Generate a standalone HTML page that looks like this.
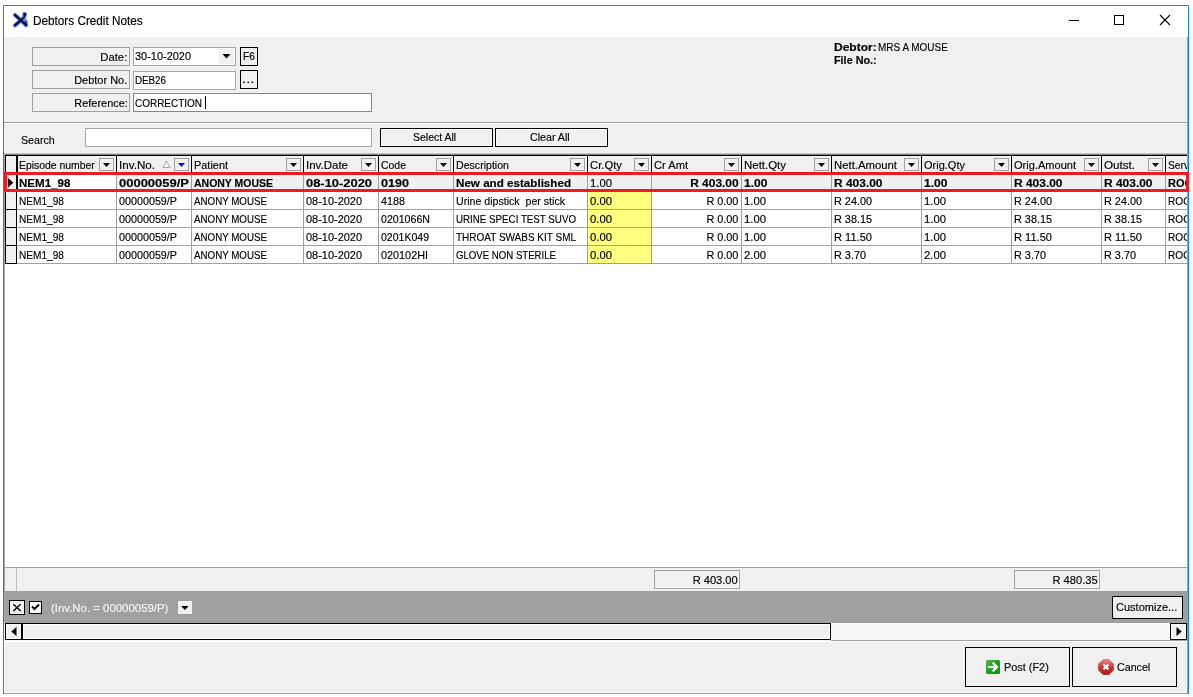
<!DOCTYPE html>
<html><head><meta charset="utf-8"><title>Debtors Credit Notes</title>
<style>
html,body{margin:0;padding:0;background:#fff;}
body{width:1193px;height:697px;position:relative;overflow:hidden;font-family:'Liberation Sans', sans-serif;}
div,span,svg{position:absolute;display:block;}
span{white-space:pre;-webkit-text-stroke:0.16px currentColor;}
</style></head><body>
<div style="left:3px;top:5px;width:1186px;height:689px;background:#f0f0f0;"></div>
<div style="left:3px;top:5px;width:1186px;height:32px;background:#fff;"></div>
<div style="left:3px;top:5px;width:1186px;height:1px;background:#1883d7;"></div>
<div style="left:3px;top:5px;width:1px;height:689px;background:#1883d7;"></div>
<div style="left:1188px;top:5px;width:1px;height:689px;background:#1883d7;"></div>
<div style="left:4px;top:693px;width:1184px;height:1px;background:#a0a0a0;"></div>
<svg style="left:8px;top:8px" width="24" height="24" viewBox="8 8 24 24">
<defs><filter id="gl" x="-30%" y="-30%" width="160%" height="160%"><feGaussianBlur stdDeviation="0.55"/></filter></defs>
<g stroke="#3a63ff" stroke-width="4.3" stroke-linecap="round" stroke-linejoin="round" fill="none" filter="url(#gl)" opacity=".85"><path d="M15 15 L26 25"/><path d="M15 25.3 L22 19.3 L24 17.5 L24.6 14"/><path d="M25.5 21.5 L26 25"/></g>
<g stroke="#0a0a0a" stroke-linecap="round" stroke-linejoin="round" fill="none"><path d="M15 15 L26 25" stroke-width="1.9"/><path d="M15 25.3 L22 19.3" stroke-width="1.9"/><path d="M22 19.3 L24.1 17.6 L24.5 14.2" stroke-width="1.3"/><path d="M24 13.8 H25.6 V15" stroke-width="1.4"/><path d="M25.6 21.8 L26 25" stroke-width="1.3"/></g>
</svg>
<div style="left:1069px;top:20px;width:10px;height:1px;background:#000;"></div>
<div style="left:1114px;top:15px;width:10px;height:10px;border:1px solid #000;box-sizing:border-box;"></div>
<svg style="left:1159px;top:14px" width="12" height="12" viewBox="0 0 12 12"><path d="M1 1 L11 11 M11 1 L1 11" stroke="#000" stroke-width="1.1" fill="none"/></svg>
<div style="left:32px;top:47px;width:98px;height:19px;background:#f0f0f0;border:1px solid #a0a0a0;box-sizing:border-box;"></div>
<div style="left:32px;top:70px;width:98px;height:19px;background:#f0f0f0;border:1px solid #a0a0a0;box-sizing:border-box;"></div>
<div style="left:32px;top:93px;width:98px;height:19px;background:#f0f0f0;border:1px solid #a0a0a0;box-sizing:border-box;"></div>
<div style="left:133px;top:47px;width:103px;height:19px;background:#fff;border:1px solid #a6a6a6;box-sizing:border-box;"></div>
<div style="left:219px;top:49px;width:15px;height:15px;background:#f0f0f0;"></div>
<svg style="left:222px;top:54px" width="9" height="5" viewBox="0 0 9 5"><path d="M0.5 0 H8.5 L4.5 4.5 Z" fill="#000"/></svg>
<div style="left:133px;top:71px;width:103px;height:19px;background:#fff;border:1px solid #a6a6a6;box-sizing:border-box;"></div>
<div style="left:133px;top:93px;width:239px;height:19px;background:#fff;border:1px solid #3399ff;box-sizing:border-box;"></div>
<div style="left:205px;top:96px;width:1px;height:13px;background:#000;"></div>
<div style="left:240px;top:47px;width:18px;height:19px;background:#f0f0f0;border:1px solid #000;box-sizing:border-box;"></div>
<div style="left:240px;top:70px;width:18px;height:19px;background:#f0f0f0;border:1px solid #000;box-sizing:border-box;"></div>
<div style="left:4px;top:122px;width:1184px;height:1px;background:#a0a0a0;"></div>
<div style="left:4px;top:123px;width:1184px;height:1px;background:#fff;"></div>
<div style="left:85px;top:128px;width:287px;height:19px;background:#fff;border:1px solid #a6a6a6;box-sizing:border-box;"></div>
<div style="left:380px;top:128px;width:113px;height:19px;background:#f0f0f0;border:1px solid #000;box-sizing:border-box;box-shadow:inset 0 0 0 1px #fafafa;"></div>
<div style="left:495px;top:128px;width:113px;height:19px;background:#f0f0f0;border:1px solid #000;box-sizing:border-box;box-shadow:inset 0 0 0 1px #fafafa;"></div>
<div style="left:4px;top:153px;width:1184px;height:1px;background:#c8c8c8;"></div>
<div style="left:4px;top:154px;width:1184px;height:1px;background:#808080;"></div>
<div style="left:5px;top:155px;width:1183px;height:1px;background:#000;"></div>
<div style="left:5px;top:156px;width:1183px;height:411px;background:#fff;"></div>
<div style="left:5px;top:156px;width:1183px;height:17px;background:#f0f0f0;"></div>
<div style="left:5px;top:173px;width:1183px;height:1px;background:#000;"></div>
<div style="left:5px;top:155px;width:1px;height:109px;background:#000;"></div>
<div style="left:16px;top:156px;width:1px;height:17px;background:#000;"></div>
<div style="left:116px;top:156px;width:1px;height:17px;background:#000;"></div>
<div style="left:191px;top:156px;width:1px;height:17px;background:#000;"></div>
<div style="left:303px;top:156px;width:1px;height:17px;background:#000;"></div>
<div style="left:378px;top:156px;width:1px;height:17px;background:#000;"></div>
<div style="left:453px;top:156px;width:1px;height:17px;background:#000;"></div>
<div style="left:587px;top:156px;width:1px;height:17px;background:#000;"></div>
<div style="left:651px;top:156px;width:1px;height:17px;background:#000;"></div>
<div style="left:741px;top:156px;width:1px;height:17px;background:#000;"></div>
<div style="left:831px;top:156px;width:1px;height:17px;background:#000;"></div>
<div style="left:921px;top:156px;width:1px;height:17px;background:#000;"></div>
<div style="left:1011px;top:156px;width:1px;height:17px;background:#000;"></div>
<div style="left:1101px;top:156px;width:1px;height:17px;background:#000;"></div>
<div style="left:1165px;top:156px;width:1px;height:17px;background:#000;"></div>
<div style="left:17px;top:156px;width:1px;height:17px;background:#000;"></div>
<div style="left:99px;top:158px;width:15px;height:13px;background:#f0f0f0;border:1px solid #a0a0a0;box-sizing:border-box;"></div>
<svg style="left:103px;top:163px" width="7" height="4" viewBox="0 0 7 4"><path d="M0 0 H7 L3.5 4 Z" fill="#000"/></svg>
<div style="left:174px;top:158px;width:15px;height:13px;background:#f0f0f0;border:1px solid #a0a0a0;box-sizing:border-box;"></div>
<svg style="left:178px;top:163px" width="7" height="4" viewBox="0 0 7 4"><path d="M0 0 H7 L3.5 4 Z" fill="#0000ff"/></svg>
<div style="left:286px;top:158px;width:15px;height:13px;background:#f0f0f0;border:1px solid #a0a0a0;box-sizing:border-box;"></div>
<svg style="left:290px;top:163px" width="7" height="4" viewBox="0 0 7 4"><path d="M0 0 H7 L3.5 4 Z" fill="#000"/></svg>
<div style="left:361px;top:158px;width:15px;height:13px;background:#f0f0f0;border:1px solid #a0a0a0;box-sizing:border-box;"></div>
<svg style="left:365px;top:163px" width="7" height="4" viewBox="0 0 7 4"><path d="M0 0 H7 L3.5 4 Z" fill="#000"/></svg>
<div style="left:436px;top:158px;width:15px;height:13px;background:#f0f0f0;border:1px solid #a0a0a0;box-sizing:border-box;"></div>
<svg style="left:440px;top:163px" width="7" height="4" viewBox="0 0 7 4"><path d="M0 0 H7 L3.5 4 Z" fill="#000"/></svg>
<div style="left:570px;top:158px;width:15px;height:13px;background:#f0f0f0;border:1px solid #a0a0a0;box-sizing:border-box;"></div>
<svg style="left:574px;top:163px" width="7" height="4" viewBox="0 0 7 4"><path d="M0 0 H7 L3.5 4 Z" fill="#000"/></svg>
<div style="left:634px;top:158px;width:15px;height:13px;background:#f0f0f0;border:1px solid #a0a0a0;box-sizing:border-box;"></div>
<svg style="left:638px;top:163px" width="7" height="4" viewBox="0 0 7 4"><path d="M0 0 H7 L3.5 4 Z" fill="#000"/></svg>
<div style="left:724px;top:158px;width:15px;height:13px;background:#f0f0f0;border:1px solid #a0a0a0;box-sizing:border-box;"></div>
<svg style="left:728px;top:163px" width="7" height="4" viewBox="0 0 7 4"><path d="M0 0 H7 L3.5 4 Z" fill="#000"/></svg>
<div style="left:814px;top:158px;width:15px;height:13px;background:#f0f0f0;border:1px solid #a0a0a0;box-sizing:border-box;"></div>
<svg style="left:818px;top:163px" width="7" height="4" viewBox="0 0 7 4"><path d="M0 0 H7 L3.5 4 Z" fill="#000"/></svg>
<div style="left:904px;top:158px;width:15px;height:13px;background:#f0f0f0;border:1px solid #a0a0a0;box-sizing:border-box;"></div>
<svg style="left:908px;top:163px" width="7" height="4" viewBox="0 0 7 4"><path d="M0 0 H7 L3.5 4 Z" fill="#000"/></svg>
<div style="left:994px;top:158px;width:15px;height:13px;background:#f0f0f0;border:1px solid #a0a0a0;box-sizing:border-box;"></div>
<svg style="left:998px;top:163px" width="7" height="4" viewBox="0 0 7 4"><path d="M0 0 H7 L3.5 4 Z" fill="#000"/></svg>
<div style="left:1084px;top:158px;width:15px;height:13px;background:#f0f0f0;border:1px solid #a0a0a0;box-sizing:border-box;"></div>
<svg style="left:1088px;top:163px" width="7" height="4" viewBox="0 0 7 4"><path d="M0 0 H7 L3.5 4 Z" fill="#000"/></svg>
<div style="left:1148px;top:158px;width:15px;height:13px;background:#f0f0f0;border:1px solid #a0a0a0;box-sizing:border-box;"></div>
<svg style="left:1152px;top:163px" width="7" height="4" viewBox="0 0 7 4"><path d="M0 0 H7 L3.5 4 Z" fill="#000"/></svg>
<svg style="left:162px;top:160px" width="9" height="8" viewBox="0 0 9 8"><path d="M4.5 1 L8 7.5 H1 Z" fill="#fff" stroke="#a0a0a0" stroke-width="1"/></svg>
<div style="left:117px;top:174px;width:1071px;height:17px;background:#f0f0f0;"></div>
<div style="left:652px;top:174px;width:89px;height:17px;background:#f0f0f0;"></div>
<div style="left:6px;top:174px;width:10px;height:17px;background:#f0f0f0;"></div>
<div style="left:5px;top:191px;width:12px;height:1px;background:#000;"></div>
<div style="left:17px;top:191px;width:1171px;height:1px;background:#a0a0a0;"></div>
<div style="left:116px;top:174px;width:1px;height:18px;background:#a0a0a0;"></div>
<div style="left:191px;top:174px;width:1px;height:18px;background:#a0a0a0;"></div>
<div style="left:303px;top:174px;width:1px;height:18px;background:#a0a0a0;"></div>
<div style="left:378px;top:174px;width:1px;height:18px;background:#a0a0a0;"></div>
<div style="left:453px;top:174px;width:1px;height:18px;background:#a0a0a0;"></div>
<div style="left:587px;top:174px;width:1px;height:18px;background:#a0a0a0;"></div>
<div style="left:651px;top:174px;width:1px;height:18px;background:#a0a0a0;"></div>
<div style="left:741px;top:174px;width:1px;height:18px;background:#a0a0a0;"></div>
<div style="left:831px;top:174px;width:1px;height:18px;background:#a0a0a0;"></div>
<div style="left:921px;top:174px;width:1px;height:18px;background:#a0a0a0;"></div>
<div style="left:1011px;top:174px;width:1px;height:18px;background:#a0a0a0;"></div>
<div style="left:1101px;top:174px;width:1px;height:18px;background:#a0a0a0;"></div>
<div style="left:1165px;top:174px;width:1px;height:18px;background:#a0a0a0;"></div>
<div style="left:16px;top:174px;width:1px;height:18px;background:#000;"></div>
<div style="left:17px;top:174px;width:1px;height:17px;background:#000;"></div>
<div style="left:588px;top:192px;width:63px;height:17px;background:#ffff80;"></div>
<div style="left:6px;top:192px;width:10px;height:17px;background:#f0f0f0;"></div>
<div style="left:5px;top:209px;width:12px;height:1px;background:#000;"></div>
<div style="left:17px;top:209px;width:1171px;height:1px;background:#a0a0a0;"></div>
<div style="left:116px;top:192px;width:1px;height:18px;background:#a0a0a0;"></div>
<div style="left:191px;top:192px;width:1px;height:18px;background:#a0a0a0;"></div>
<div style="left:303px;top:192px;width:1px;height:18px;background:#a0a0a0;"></div>
<div style="left:378px;top:192px;width:1px;height:18px;background:#a0a0a0;"></div>
<div style="left:453px;top:192px;width:1px;height:18px;background:#a0a0a0;"></div>
<div style="left:587px;top:192px;width:1px;height:18px;background:#a0a0a0;"></div>
<div style="left:651px;top:192px;width:1px;height:18px;background:#a0a0a0;"></div>
<div style="left:741px;top:192px;width:1px;height:18px;background:#a0a0a0;"></div>
<div style="left:831px;top:192px;width:1px;height:18px;background:#a0a0a0;"></div>
<div style="left:921px;top:192px;width:1px;height:18px;background:#a0a0a0;"></div>
<div style="left:1011px;top:192px;width:1px;height:18px;background:#a0a0a0;"></div>
<div style="left:1101px;top:192px;width:1px;height:18px;background:#a0a0a0;"></div>
<div style="left:1165px;top:192px;width:1px;height:18px;background:#a0a0a0;"></div>
<div style="left:16px;top:192px;width:1px;height:18px;background:#000;"></div>
<div style="left:588px;top:210px;width:63px;height:17px;background:#ffff80;"></div>
<div style="left:6px;top:210px;width:10px;height:17px;background:#f0f0f0;"></div>
<div style="left:5px;top:227px;width:12px;height:1px;background:#000;"></div>
<div style="left:17px;top:227px;width:1171px;height:1px;background:#a0a0a0;"></div>
<div style="left:116px;top:210px;width:1px;height:18px;background:#a0a0a0;"></div>
<div style="left:191px;top:210px;width:1px;height:18px;background:#a0a0a0;"></div>
<div style="left:303px;top:210px;width:1px;height:18px;background:#a0a0a0;"></div>
<div style="left:378px;top:210px;width:1px;height:18px;background:#a0a0a0;"></div>
<div style="left:453px;top:210px;width:1px;height:18px;background:#a0a0a0;"></div>
<div style="left:587px;top:210px;width:1px;height:18px;background:#a0a0a0;"></div>
<div style="left:651px;top:210px;width:1px;height:18px;background:#a0a0a0;"></div>
<div style="left:741px;top:210px;width:1px;height:18px;background:#a0a0a0;"></div>
<div style="left:831px;top:210px;width:1px;height:18px;background:#a0a0a0;"></div>
<div style="left:921px;top:210px;width:1px;height:18px;background:#a0a0a0;"></div>
<div style="left:1011px;top:210px;width:1px;height:18px;background:#a0a0a0;"></div>
<div style="left:1101px;top:210px;width:1px;height:18px;background:#a0a0a0;"></div>
<div style="left:1165px;top:210px;width:1px;height:18px;background:#a0a0a0;"></div>
<div style="left:16px;top:210px;width:1px;height:18px;background:#000;"></div>
<div style="left:588px;top:228px;width:63px;height:17px;background:#ffff80;"></div>
<div style="left:6px;top:228px;width:10px;height:17px;background:#f0f0f0;"></div>
<div style="left:5px;top:245px;width:12px;height:1px;background:#000;"></div>
<div style="left:17px;top:245px;width:1171px;height:1px;background:#a0a0a0;"></div>
<div style="left:116px;top:228px;width:1px;height:18px;background:#a0a0a0;"></div>
<div style="left:191px;top:228px;width:1px;height:18px;background:#a0a0a0;"></div>
<div style="left:303px;top:228px;width:1px;height:18px;background:#a0a0a0;"></div>
<div style="left:378px;top:228px;width:1px;height:18px;background:#a0a0a0;"></div>
<div style="left:453px;top:228px;width:1px;height:18px;background:#a0a0a0;"></div>
<div style="left:587px;top:228px;width:1px;height:18px;background:#a0a0a0;"></div>
<div style="left:651px;top:228px;width:1px;height:18px;background:#a0a0a0;"></div>
<div style="left:741px;top:228px;width:1px;height:18px;background:#a0a0a0;"></div>
<div style="left:831px;top:228px;width:1px;height:18px;background:#a0a0a0;"></div>
<div style="left:921px;top:228px;width:1px;height:18px;background:#a0a0a0;"></div>
<div style="left:1011px;top:228px;width:1px;height:18px;background:#a0a0a0;"></div>
<div style="left:1101px;top:228px;width:1px;height:18px;background:#a0a0a0;"></div>
<div style="left:1165px;top:228px;width:1px;height:18px;background:#a0a0a0;"></div>
<div style="left:16px;top:228px;width:1px;height:18px;background:#000;"></div>
<div style="left:588px;top:246px;width:63px;height:17px;background:#ffff80;"></div>
<div style="left:6px;top:246px;width:10px;height:17px;background:#f0f0f0;"></div>
<div style="left:5px;top:263px;width:12px;height:1px;background:#000;"></div>
<div style="left:17px;top:263px;width:1171px;height:1px;background:#a0a0a0;"></div>
<div style="left:116px;top:246px;width:1px;height:18px;background:#a0a0a0;"></div>
<div style="left:191px;top:246px;width:1px;height:18px;background:#a0a0a0;"></div>
<div style="left:303px;top:246px;width:1px;height:18px;background:#a0a0a0;"></div>
<div style="left:378px;top:246px;width:1px;height:18px;background:#a0a0a0;"></div>
<div style="left:453px;top:246px;width:1px;height:18px;background:#a0a0a0;"></div>
<div style="left:587px;top:246px;width:1px;height:18px;background:#a0a0a0;"></div>
<div style="left:651px;top:246px;width:1px;height:18px;background:#a0a0a0;"></div>
<div style="left:741px;top:246px;width:1px;height:18px;background:#a0a0a0;"></div>
<div style="left:831px;top:246px;width:1px;height:18px;background:#a0a0a0;"></div>
<div style="left:921px;top:246px;width:1px;height:18px;background:#a0a0a0;"></div>
<div style="left:1011px;top:246px;width:1px;height:18px;background:#a0a0a0;"></div>
<div style="left:1101px;top:246px;width:1px;height:18px;background:#a0a0a0;"></div>
<div style="left:1165px;top:246px;width:1px;height:18px;background:#a0a0a0;"></div>
<div style="left:16px;top:246px;width:1px;height:18px;background:#000;"></div>
<svg style="left:8px;top:178px" width="6" height="10" viewBox="0 0 6 10"><path d="M0 0 L5.3 4.7 L0 9.4 Z" fill="#000"/></svg>
<div style="left:4px;top:154px;width:1px;height:469px;background:#a8a8a8;"></div>
<div style="left:5px;top:567px;width:1183px;height:1px;background:#a0a0a0;"></div>
<div style="left:5px;top:568px;width:1183px;height:23px;background:#f0f0f0;"></div>
<div style="left:16px;top:568px;width:1px;height:23px;background:#c0c0c0;"></div>
<div style="left:654px;top:570px;width:86px;height:19px;background:#f0f0f0;border:1px solid #a0a0a0;box-sizing:border-box;"></div>
<div style="left:655px;top:587px;width:84px;height:1px;background:#fbfbfb;"></div>
<div style="left:738px;top:571px;width:1px;height:17px;background:#fbfbfb;"></div>
<div style="left:1014px;top:570px;width:86px;height:19px;background:#f0f0f0;border:1px solid #a0a0a0;box-sizing:border-box;"></div>
<div style="left:1015px;top:587px;width:84px;height:1px;background:#fbfbfb;"></div>
<div style="left:1098px;top:571px;width:1px;height:17px;background:#fbfbfb;"></div>
<div style="left:5px;top:591px;width:1183px;height:32px;background:#a0a0a0;"></div>
<div style="left:9px;top:600px;width:16px;height:15px;background:#f0f0f0;border:1px solid #000;box-sizing:border-box;"></div>
<svg style="left:12px;top:603px" width="10" height="9" viewBox="0 0 10 9"><path d="M1.3 1.2 L8.7 8 M8.7 1.2 L1.3 8" stroke="#000" stroke-width="1.4" fill="none"/></svg>
<div style="left:29px;top:601px;width:13px;height:13px;background:#fff;border:1px solid #000;box-sizing:border-box;"></div>
<svg style="left:31px;top:603px" width="9" height="9" viewBox="0 0 9 9"><path d="M1 3.5 L3.5 6 L8 1.5" stroke="#000" stroke-width="2" fill="none"/></svg>
<div style="left:178px;top:601px;width:14px;height:13px;background:#f0f0f0;"></div>
<svg style="left:181px;top:606px" width="8" height="4" viewBox="0 0 8 4"><path d="M0.2 0 H7.6 L3.9 4 Z" fill="#000"/></svg>
<div style="left:1112px;top:596px;width:71px;height:23px;background:#f0f0f0;border:1px solid #000;box-sizing:border-box;"></div>
<div style="left:5px;top:623px;width:1183px;height:17px;background:#f8f8f8;"></div>
<div style="left:5px;top:623px;width:17px;height:17px;background:#f0f0f0;border:1px solid #000;box-sizing:border-box;box-shadow:inset 0 0 0 1px #fff;"></div>
<div style="left:22px;top:623px;width:809px;height:17px;background:#f0f0f0;border:1px solid #000;box-sizing:border-box;box-shadow:inset 0 0 0 1px #fff;"></div>
<svg style="left:10.5px;top:627px" width="6" height="9" viewBox="0 0 6 9"><path d="M5.5 0 V9 L0.3 4.5 Z" fill="#000"/></svg>
<div style="left:1170px;top:623px;width:17px;height:17px;background:#f0f0f0;border:1px solid #000;box-sizing:border-box;box-shadow:inset 0 0 0 1px #fff;"></div>
<svg style="left:1176px;top:627px" width="6" height="9" viewBox="0 0 6 9"><path d="M0.5 0 V9 L5.7 4.5 Z" fill="#000"/></svg>
<div style="left:5px;top:640px;width:826px;height:1px;background:#f4f4f4;"></div>
<div style="left:831px;top:640px;width:357px;height:1px;background:#a0a0a0;"></div>
<div style="left:4px;top:641px;width:1184px;height:1px;background:#fff;"></div>
<div style="left:4px;top:641px;width:1px;height:52px;background:#fff;"></div>
<div style="left:5px;top:692px;width:1182px;height:1px;background:#f8f8f8;"></div>
<div style="left:965px;top:647px;width:105px;height:40px;background:#f0f0f0;border:1px solid #000;box-sizing:border-box;"></div>
<div style="left:1072px;top:647px;width:105px;height:40px;background:#f0f0f0;border:1px solid #000;box-sizing:border-box;"></div>
<svg style="left:986px;top:660px" width="14" height="14" viewBox="0 0 14 14">
<defs><linearGradient id="gg" x1="0" y1="0" x2="1" y2="1"><stop offset="0" stop-color="#4cb84c"/><stop offset=".45" stop-color="#1fa01f"/><stop offset="1" stop-color="#089408"/></linearGradient></defs>
<rect x="0" y="0" width="14" height="14" rx="1.6" fill="url(#gg)"/>
<path d="M2.2 7 H10.5" stroke="#fff" stroke-width="2.2" fill="none"/>
<path d="M6.6 2.6 L11 7 L6.6 11.4" stroke="#fff" stroke-width="2.2" fill="none" stroke-linejoin="miter"/></svg>
<svg style="left:1098px;top:659px" width="16" height="16" viewBox="0 0 16 16">
<defs><linearGradient id="rg" x1="0" y1="0" x2="0" y2="1"><stop offset="0" stop-color="#dd7f7f"/><stop offset=".5" stop-color="#c63a3a"/><stop offset="1" stop-color="#b42020"/></linearGradient></defs>
<path d="M5.6 1.6 H10.4 L14.4 5.6 V10.4 L10.4 14.4 H5.6 L1.6 10.4 V5.6 Z" fill="url(#rg)" stroke="url(#rg)" stroke-width="3" stroke-linejoin="round"/>
<path d="M5.5 5.4 L10.4 10.3 M10.4 5.4 L5.5 10.3" stroke="#fff" stroke-width="2.1" fill="none"/></svg>
<span style="top:13.84px;line-height:14px;font-size:12px;font-weight:normal;color:#000;left:33.4px;transform-origin:0 0;transform:scaleX(0.9791);">Debtors Credit Notes</span>
<span style="top:50.19px;line-height:14px;font-size:11px;font-weight:normal;color:#000;right:1065.7px;transform-origin:100% 0;transform:scaleX(1.0267);">Date:</span>
<span style="top:73.19px;line-height:14px;font-size:11px;font-weight:normal;color:#000;right:1065.7px;transform-origin:100% 0;transform:scaleX(0.9962);">Debtor No.</span>
<span style="top:96.19px;line-height:14px;font-size:11px;font-weight:normal;color:#000;right:1065.7px;transform-origin:100% 0;transform:scaleX(0.9942);">Reference:</span>
<span style="top:49.19px;line-height:14px;font-size:11px;font-weight:normal;color:#000;left:135px;transform-origin:0 0;transform:scaleX(0.9950);">30-10-2020</span>
<span style="top:73.19px;line-height:14px;font-size:11px;font-weight:normal;color:#000;left:135px;transform-origin:0 0;transform:scaleX(0.8893);">DEB26</span>
<span style="top:96.19px;line-height:14px;font-size:11px;font-weight:normal;color:#000;left:135px;transform-origin:0 0;transform:scaleX(0.9060);">CORRECTION</span>
<span style="top:49.19px;line-height:14px;font-size:11px;font-weight:normal;color:#000;left:243px;transform-origin:0 0;transform:scaleX(0.9343);">F6</span>
<span style="top:72.19px;line-height:14px;font-size:11px;font-weight:normal;color:#000;left:242.20000000000002px;transform-origin:0 0;transform:scaleX(1.3520);">...</span>
<span style="top:40.19px;line-height:14px;font-size:11px;font-weight:bold;color:#000;left:833.6999999999999px;transform-origin:0 0;transform:scaleX(1.0918);">Debtor:</span>
<span style="top:40.19px;line-height:14px;font-size:11px;font-weight:normal;color:#000;left:877.9px;transform-origin:0 0;transform:scaleX(0.9074);">MRS A MOUSE</span>
<span style="top:53.19px;line-height:14px;font-size:11px;font-weight:bold;color:#000;left:833.6999999999999px;transform-origin:0 0;transform:scaleX(0.9841);">File No.:</span>
<span style="top:133.19px;line-height:14px;font-size:11px;font-weight:normal;color:#000;left:20.9px;transform-origin:0 0;transform:scaleX(0.9667);">Search</span>
<span style="top:130.19px;line-height:14px;font-size:11px;font-weight:normal;color:#000;left:413.2px;transform-origin:0 0;transform:scaleX(0.9547);">Select All</span>
<span style="top:130.19px;line-height:14px;font-size:11px;font-weight:normal;color:#000;left:530.1px;transform-origin:0 0;transform:scaleX(0.9690);">Clear All</span>
<span style="top:158.19px;line-height:14px;font-size:11px;font-weight:normal;color:#000;left:18.8px;transform-origin:0 0;transform:scaleX(0.9462);">Episode number</span>
<span style="top:158.19px;line-height:14px;font-size:11px;font-weight:normal;color:#000;left:118.8px;transform-origin:0 0;transform:scaleX(1.0579);">Inv.No.</span>
<span style="top:158.19px;line-height:14px;font-size:11px;font-weight:normal;color:#000;left:193.8px;transform-origin:0 0;transform:scaleX(0.9927);">Patient</span>
<span style="top:158.19px;line-height:14px;font-size:11px;font-weight:normal;color:#000;left:305.8px;transform-origin:0 0;transform:scaleX(1.0459);">Inv.Date</span>
<span style="top:158.19px;line-height:14px;font-size:11px;font-weight:normal;color:#000;left:380.8px;transform-origin:0 0;transform:scaleX(0.9507);">Code</span>
<span style="top:158.19px;line-height:14px;font-size:11px;font-weight:normal;color:#000;left:455.8px;transform-origin:0 0;transform:scaleX(0.9631);">Description</span>
<span style="top:158.19px;line-height:14px;font-size:11px;font-weight:normal;color:#000;left:589.8px;transform-origin:0 0;transform:scaleX(1.0266);">Cr.Qty</span>
<span style="top:158.19px;line-height:14px;font-size:11px;font-weight:normal;color:#000;left:653.8px;transform-origin:0 0;transform:scaleX(1.0112);">Cr Amt</span>
<span style="top:158.19px;line-height:14px;font-size:11px;font-weight:normal;color:#000;left:743.8px;transform-origin:0 0;transform:scaleX(1.0411);">Nett.Qty</span>
<span style="top:158.19px;line-height:14px;font-size:11px;font-weight:normal;color:#000;left:833.8px;transform-origin:0 0;transform:scaleX(1.0304);">Nett.Amount</span>
<span style="top:158.19px;line-height:14px;font-size:11px;font-weight:normal;color:#000;left:923.8px;transform-origin:0 0;transform:scaleX(1.0011);">Orig.Qty</span>
<span style="top:158.19px;line-height:14px;font-size:11px;font-weight:normal;color:#000;left:1013.8px;transform-origin:0 0;transform:scaleX(1.0040);">Orig.Amount</span>
<span style="top:158.19px;line-height:14px;font-size:11px;font-weight:normal;color:#000;left:1103.8px;transform-origin:0 0;transform:scaleX(1.0564);">Outst.</span>
<span style="top:158.19px;line-height:14px;font-size:11px;font-weight:normal;color:#000;left:1167.8px;transform-origin:0 0;transform:scaleX(0.9282);">Serv</span>
<span style="top:176.19px;line-height:14px;font-size:11px;font-weight:bold;color:#000;left:18.7px;transform-origin:0 0;transform:scaleX(1.0507);">NEM1_98</span>
<span style="top:176.19px;line-height:14px;font-size:11px;font-weight:bold;color:#000;left:118.7px;transform-origin:0 0;transform:scaleX(1.1796);">00000059/P</span>
<span style="top:176.19px;line-height:14px;font-size:11px;font-weight:bold;color:#000;left:193.7px;transform-origin:0 0;transform:scaleX(0.9527);">ANONY MOUSE</span>
<span style="top:176.19px;line-height:14px;font-size:11px;font-weight:bold;color:#000;left:305.7px;transform-origin:0 0;transform:scaleX(1.1727);">08-10-2020</span>
<span style="top:176.19px;line-height:14px;font-size:11px;font-weight:bold;color:#000;left:380.7px;transform-origin:0 0;transform:scaleX(1.1436);">0190</span>
<span style="top:176.19px;line-height:14px;font-size:11px;font-weight:bold;color:#000;left:455.7px;transform-origin:0 0;transform:scaleX(1.0569);">New and established</span>
<span style="top:176.19px;line-height:14px;font-size:11px;font-weight:normal;color:#000;left:589.7px;transform-origin:0 0;transform:scaleX(1.0270);">1.00</span>
<span style="top:176.19px;line-height:14px;font-size:11px;font-weight:bold;color:#000;right:454.79999999999995px;transform-origin:100% 0;transform:scaleX(1.0861);">R 403.00</span>
<span style="top:176.19px;line-height:14px;font-size:11px;font-weight:bold;color:#000;left:743.7px;transform-origin:0 0;transform:scaleX(1.0970);">1.00</span>
<span style="top:176.19px;line-height:14px;font-size:11px;font-weight:bold;color:#000;left:833.7px;transform-origin:0 0;transform:scaleX(1.0861);">R 403.00</span>
<span style="top:176.19px;line-height:14px;font-size:11px;font-weight:bold;color:#000;left:923.7px;transform-origin:0 0;transform:scaleX(1.0970);">1.00</span>
<span style="top:176.19px;line-height:14px;font-size:11px;font-weight:bold;color:#000;left:1013.7px;transform-origin:0 0;transform:scaleX(1.0861);">R 403.00</span>
<span style="top:176.19px;line-height:14px;font-size:11px;font-weight:bold;color:#000;left:1103.7px;transform-origin:0 0;transform:scaleX(1.0861);">R 403.00</span>
<span style="top:176.19px;line-height:14px;font-size:11px;font-weight:bold;color:#000;left:1167.7px;transform-origin:0 0;transform:scaleX(0.9975);">ROO</span>
<span style="top:194.19px;line-height:14px;font-size:11px;font-weight:normal;color:#000;left:18.7px;transform-origin:0 0;transform:scaleX(0.9198);">NEM1_98</span>
<span style="top:194.19px;line-height:14px;font-size:11px;font-weight:normal;color:#000;left:118.7px;transform-origin:0 0;transform:scaleX(0.9774);">00000059/P</span>
<span style="top:194.19px;line-height:14px;font-size:11px;font-weight:normal;color:#000;left:193.7px;transform-origin:0 0;transform:scaleX(0.8869);">ANONY MOUSE</span>
<span style="top:194.19px;line-height:14px;font-size:11px;font-weight:normal;color:#000;left:305.7px;transform-origin:0 0;transform:scaleX(0.9950);">08-10-2020</span>
<span style="top:194.19px;line-height:14px;font-size:11px;font-weight:normal;color:#000;left:380.7px;transform-origin:0 0;transform:scaleX(0.9802);">4188</span>
<span style="top:194.19px;line-height:14px;font-size:11px;font-weight:normal;color:#000;left:455.7px;transform-origin:0 0;transform:scaleX(0.9638);">Urine dipstick  per stick</span>
<span style="top:194.19px;line-height:14px;font-size:11px;font-weight:normal;color:#000;left:589.7px;transform-origin:0 0;transform:scaleX(1.0270);">0.00</span>
<span style="top:194.19px;line-height:14px;font-size:11px;font-weight:normal;color:#000;right:454.79999999999995px;transform-origin:100% 0;transform:scaleX(0.9870);">R 0.00</span>
<span style="top:194.19px;line-height:14px;font-size:11px;font-weight:normal;color:#000;left:743.7px;transform-origin:0 0;transform:scaleX(1.0270);">1.00</span>
<span style="top:194.19px;line-height:14px;font-size:11px;font-weight:normal;color:#000;left:833.7px;transform-origin:0 0;transform:scaleX(0.9862);">R 24.00</span>
<span style="top:194.19px;line-height:14px;font-size:11px;font-weight:normal;color:#000;left:923.7px;transform-origin:0 0;transform:scaleX(1.0270);">1.00</span>
<span style="top:194.19px;line-height:14px;font-size:11px;font-weight:normal;color:#000;left:1013.7px;transform-origin:0 0;transform:scaleX(0.9862);">R 24.00</span>
<span style="top:194.19px;line-height:14px;font-size:11px;font-weight:normal;color:#000;left:1103.7px;transform-origin:0 0;transform:scaleX(0.9862);">R 24.00</span>
<span style="top:194.19px;line-height:14px;font-size:11px;font-weight:normal;color:#000;left:1167.7px;transform-origin:0 0;transform:scaleX(0.9177);">ROO</span>
<span style="top:212.19px;line-height:14px;font-size:11px;font-weight:normal;color:#000;left:18.7px;transform-origin:0 0;transform:scaleX(0.9198);">NEM1_98</span>
<span style="top:212.19px;line-height:14px;font-size:11px;font-weight:normal;color:#000;left:118.7px;transform-origin:0 0;transform:scaleX(0.9774);">00000059/P</span>
<span style="top:212.19px;line-height:14px;font-size:11px;font-weight:normal;color:#000;left:193.7px;transform-origin:0 0;transform:scaleX(0.8869);">ANONY MOUSE</span>
<span style="top:212.19px;line-height:14px;font-size:11px;font-weight:normal;color:#000;left:305.7px;transform-origin:0 0;transform:scaleX(0.9950);">08-10-2020</span>
<span style="top:212.19px;line-height:14px;font-size:11px;font-weight:normal;color:#000;left:380.7px;transform-origin:0 0;transform:scaleX(0.9649);">0201066N</span>
<span style="top:212.19px;line-height:14px;font-size:11px;font-weight:normal;color:#000;left:455.7px;transform-origin:0 0;transform:scaleX(0.8869);">URINE SPECI TEST SUVO</span>
<span style="top:212.19px;line-height:14px;font-size:11px;font-weight:normal;color:#000;left:589.7px;transform-origin:0 0;transform:scaleX(1.0270);">0.00</span>
<span style="top:212.19px;line-height:14px;font-size:11px;font-weight:normal;color:#000;right:454.79999999999995px;transform-origin:100% 0;transform:scaleX(0.9870);">R 0.00</span>
<span style="top:212.19px;line-height:14px;font-size:11px;font-weight:normal;color:#000;left:743.7px;transform-origin:0 0;transform:scaleX(1.0270);">1.00</span>
<span style="top:212.19px;line-height:14px;font-size:11px;font-weight:normal;color:#000;left:833.7px;transform-origin:0 0;transform:scaleX(0.9862);">R 38.15</span>
<span style="top:212.19px;line-height:14px;font-size:11px;font-weight:normal;color:#000;left:923.7px;transform-origin:0 0;transform:scaleX(1.0270);">1.00</span>
<span style="top:212.19px;line-height:14px;font-size:11px;font-weight:normal;color:#000;left:1013.7px;transform-origin:0 0;transform:scaleX(0.9862);">R 38.15</span>
<span style="top:212.19px;line-height:14px;font-size:11px;font-weight:normal;color:#000;left:1103.7px;transform-origin:0 0;transform:scaleX(0.9862);">R 38.15</span>
<span style="top:212.19px;line-height:14px;font-size:11px;font-weight:normal;color:#000;left:1167.7px;transform-origin:0 0;transform:scaleX(0.9177);">ROO</span>
<span style="top:230.19px;line-height:14px;font-size:11px;font-weight:normal;color:#000;left:18.7px;transform-origin:0 0;transform:scaleX(0.9198);">NEM1_98</span>
<span style="top:230.19px;line-height:14px;font-size:11px;font-weight:normal;color:#000;left:118.7px;transform-origin:0 0;transform:scaleX(0.9774);">00000059/P</span>
<span style="top:230.19px;line-height:14px;font-size:11px;font-weight:normal;color:#000;left:193.7px;transform-origin:0 0;transform:scaleX(0.8869);">ANONY MOUSE</span>
<span style="top:230.19px;line-height:14px;font-size:11px;font-weight:normal;color:#000;left:305.7px;transform-origin:0 0;transform:scaleX(0.9950);">08-10-2020</span>
<span style="top:230.19px;line-height:14px;font-size:11px;font-weight:normal;color:#000;left:380.7px;transform-origin:0 0;transform:scaleX(0.9567);">0201K049</span>
<span style="top:230.19px;line-height:14px;font-size:11px;font-weight:normal;color:#000;left:455.7px;transform-origin:0 0;transform:scaleX(0.9075);">THROAT SWABS KIT SML</span>
<span style="top:230.19px;line-height:14px;font-size:11px;font-weight:normal;color:#000;left:589.7px;transform-origin:0 0;transform:scaleX(1.0270);">0.00</span>
<span style="top:230.19px;line-height:14px;font-size:11px;font-weight:normal;color:#000;right:454.79999999999995px;transform-origin:100% 0;transform:scaleX(0.9870);">R 0.00</span>
<span style="top:230.19px;line-height:14px;font-size:11px;font-weight:normal;color:#000;left:743.7px;transform-origin:0 0;transform:scaleX(1.0270);">1.00</span>
<span style="top:230.19px;line-height:14px;font-size:11px;font-weight:normal;color:#000;left:833.7px;transform-origin:0 0;transform:scaleX(1.0075);">R 11.50</span>
<span style="top:230.19px;line-height:14px;font-size:11px;font-weight:normal;color:#000;left:923.7px;transform-origin:0 0;transform:scaleX(1.0270);">1.00</span>
<span style="top:230.19px;line-height:14px;font-size:11px;font-weight:normal;color:#000;left:1013.7px;transform-origin:0 0;transform:scaleX(1.0075);">R 11.50</span>
<span style="top:230.19px;line-height:14px;font-size:11px;font-weight:normal;color:#000;left:1103.7px;transform-origin:0 0;transform:scaleX(1.0075);">R 11.50</span>
<span style="top:230.19px;line-height:14px;font-size:11px;font-weight:normal;color:#000;left:1167.7px;transform-origin:0 0;transform:scaleX(0.9177);">ROO</span>
<span style="top:248.19px;line-height:14px;font-size:11px;font-weight:normal;color:#000;left:18.7px;transform-origin:0 0;transform:scaleX(0.9198);">NEM1_98</span>
<span style="top:248.19px;line-height:14px;font-size:11px;font-weight:normal;color:#000;left:118.7px;transform-origin:0 0;transform:scaleX(0.9774);">00000059/P</span>
<span style="top:248.19px;line-height:14px;font-size:11px;font-weight:normal;color:#000;left:193.7px;transform-origin:0 0;transform:scaleX(0.8869);">ANONY MOUSE</span>
<span style="top:248.19px;line-height:14px;font-size:11px;font-weight:normal;color:#000;left:305.7px;transform-origin:0 0;transform:scaleX(0.9950);">08-10-2020</span>
<span style="top:248.19px;line-height:14px;font-size:11px;font-weight:normal;color:#000;left:380.7px;transform-origin:0 0;transform:scaleX(0.9849);">020102HI</span>
<span style="top:248.19px;line-height:14px;font-size:11px;font-weight:normal;color:#000;left:455.7px;transform-origin:0 0;transform:scaleX(0.8748);">GLOVE NON STERILE</span>
<span style="top:248.19px;line-height:14px;font-size:11px;font-weight:normal;color:#000;left:589.7px;transform-origin:0 0;transform:scaleX(1.0270);">0.00</span>
<span style="top:248.19px;line-height:14px;font-size:11px;font-weight:normal;color:#000;right:454.79999999999995px;transform-origin:100% 0;transform:scaleX(0.9870);">R 0.00</span>
<span style="top:248.19px;line-height:14px;font-size:11px;font-weight:normal;color:#000;left:743.7px;transform-origin:0 0;transform:scaleX(1.0270);">2.00</span>
<span style="top:248.19px;line-height:14px;font-size:11px;font-weight:normal;color:#000;left:833.7px;transform-origin:0 0;transform:scaleX(0.9870);">R 3.70</span>
<span style="top:248.19px;line-height:14px;font-size:11px;font-weight:normal;color:#000;left:923.7px;transform-origin:0 0;transform:scaleX(1.0270);">2.00</span>
<span style="top:248.19px;line-height:14px;font-size:11px;font-weight:normal;color:#000;left:1013.7px;transform-origin:0 0;transform:scaleX(0.9870);">R 3.70</span>
<span style="top:248.19px;line-height:14px;font-size:11px;font-weight:normal;color:#000;left:1103.7px;transform-origin:0 0;transform:scaleX(0.9870);">R 3.70</span>
<span style="top:248.19px;line-height:14px;font-size:11px;font-weight:normal;color:#000;left:1167.7px;transform-origin:0 0;transform:scaleX(0.9177);">ROO</span>
<span style="top:573.19px;line-height:14px;font-size:11px;font-weight:normal;color:#000;right:455.79999999999995px;transform-origin:100% 0;transform:scaleX(1.0077);">R 403.00</span>
<span style="top:573.19px;line-height:14px;font-size:11px;font-weight:normal;color:#000;right:95.60000000000014px;transform-origin:100% 0;transform:scaleX(1.0122);">R 480.35</span>
<span style="top:601.19px;line-height:14px;font-size:11px;font-weight:normal;color:#f4f4f4;left:51.0px;transform-origin:0 0;transform:scaleX(1.0368);">(Inv.No. = 00000059/P)</span>
<span style="top:599.69px;line-height:14px;font-size:11px;font-weight:normal;color:#000;left:1116.1000000000001px;transform-origin:0 0;transform:scaleX(1.0010);">Customize...</span>
<span style="top:660.19px;line-height:14px;font-size:11px;font-weight:normal;color:#000;left:1003.8px;transform-origin:0 0;transform:scaleX(0.9904);">Post (F2)</span>
<span style="top:660.19px;line-height:14px;font-size:11px;font-weight:normal;color:#000;left:1116.7px;transform-origin:0 0;transform:scaleX(0.9693);">Cancel</span>
<div style="left:1187px;top:37px;width:1px;height:656px;background:#a0a0a0"></div>
<div style="left:1188px;top:5px;width:1px;height:689px;background:#1883d7"></div>
<div style="left:1189px;top:0;width:4px;height:697px;background:#fff"></div>
<div style="left:4px;top:172px;width:1185px;height:20px;border:3px solid #ed1c24;box-sizing:border-box"></div>
</body></html>
